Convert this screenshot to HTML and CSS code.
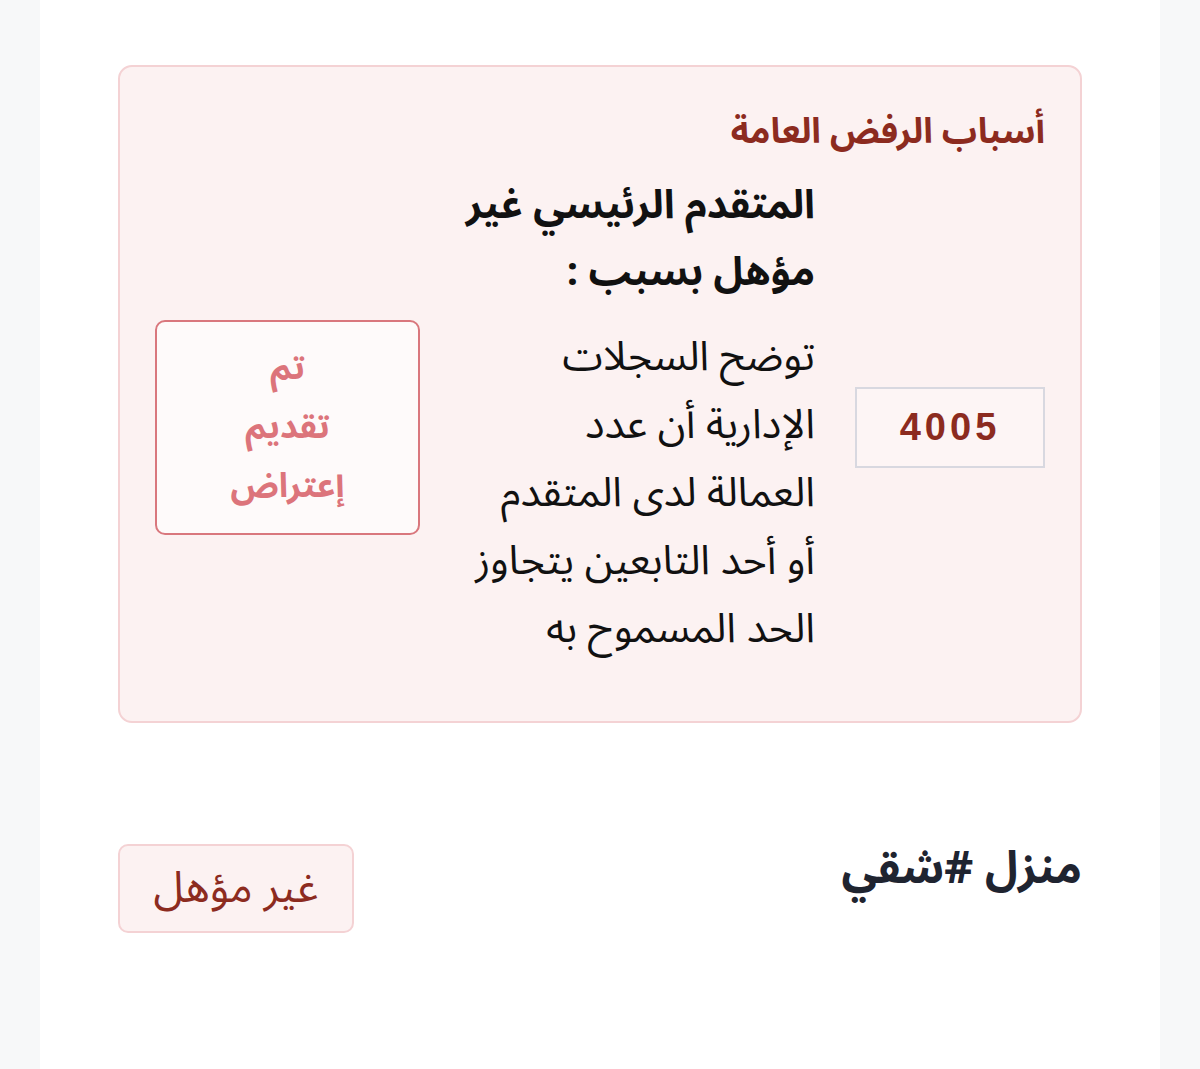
FILE: index.html
```html
<!DOCTYPE html>
<html lang="ar" dir="rtl">
<head>
<meta charset="utf-8">
<title>أسباب الرفض</title>
<link rel="stylesheet" href="styles.css">
</head>
<body>
<div class="page">
  <main class="panel">
    <section class="reject-card">
      <h2 class="reject-title">أسباب الرفض العامة</h2>
      <div class="reject-row">
        <div class="code-col">
          <div class="code-box">4005</div>
        </div>
        <div class="reason-col">
          <p class="reason-head">المتقدم الرئيسي غير مؤهل بسبب :</p>
          <p class="reason-text">توضح السجلات<br>الإدارية أن عدد<br>العمالة لدى المتقدم<br>أو أحد التابعين يتجاوز<br>الحد المسموح به</p>
        </div>
        <div class="action-col">
          <div class="objection-box">تم<br>تقديم<br>إعتراض</div>
        </div>
      </div>
    </section>
    <section class="status-row">
      <h3 class="home-title">منزل #شقي</h3>
      <span class="status-badge">غير مؤهل</span>
    </section>
  </main>
</div>
</body>
</html>
```

FILE: styles.css
```css
html, body {
  margin: 0;
  padding: 0;
}
body {
  background: #f7f8f9;
  font-family: "Noto Sans Arabic", "Noto Naskh Arabic", "DejaVu Sans", sans-serif;
}
.page {
  display: flex;
  justify-content: center;
  min-height: 1069px;
}
.panel {
  width: 1120px;
  background: #ffffff;
  box-sizing: border-box;
  padding: 65px 78px 0;
  min-height: 1069px;
}
.reject-card {
  background: #fcf2f2;
  border: 2px solid #f4d2d4;
  border-radius: 14px;
  padding: 37px 35px 38px;
}
.reject-title {
  margin: 0;
  color: #8c2b1f;
  font-size: 35px;
  font-weight: 700;
  line-height: 56px;
}
.reject-row {
  display: flex;
  align-items: center;
  gap: 40px;
  margin-top: 12px;
}
.code-col {
  width: 190px;
  flex: none;
}
.code-box {
  border: 2px solid #d8d8e0;
  height: 81px;
  box-sizing: border-box;
  display: flex;
  align-items: center;
  justify-content: center;
  color: #8c2b1f;
  font-family: "Liberation Sans", Arial, sans-serif;
  font-size: 38px;
  font-weight: 700;
  letter-spacing: 4px;
  background: #fdf5f5;
}
.reason-col {
  width: 355px;
  flex: none;
  padding-bottom: 20px;
}
.reason-head {
  margin: 0;
  font-size: 40px;
  font-weight: 700;
  line-height: 67px;
  color: #111111;
}
.reason-text {
  margin: 17px 0 0;
  font-size: 41px;
  font-weight: 400;
  line-height: 68px;
  color: #111111;
  white-space: nowrap;
}
.action-col {
  flex: none;
  width: 265px;
}
.objection-box {
  border: 2px solid #d9777d;
  border-radius: 10px;
  height: 215px;
  box-sizing: border-box;
  background: #fefafa;
  display: flex;
  flex-direction: column;
  justify-content: center;
  text-align: center;
  color: #dc747b;
  font-size: 34px;
  font-weight: 700;
  line-height: 59px;
}
.status-row {
  display: flex;
  justify-content: space-between;
  align-items: flex-start;
  margin-top: 121px;
}
.home-title {
  margin: 0;
  font-size: 45px;
  font-weight: 700;
  line-height: 50px;
  color: #1f2430;
}
.status-badge {
  display: inline-flex;
  align-items: center;
  justify-content: center;
  width: 236px;
  height: 89px;
  box-sizing: border-box;
  background: #fcf2f2;
  border: 2px solid #f4d2d4;
  border-radius: 10px;
  color: #8c2b1f;
  font-size: 43px;
}
```
